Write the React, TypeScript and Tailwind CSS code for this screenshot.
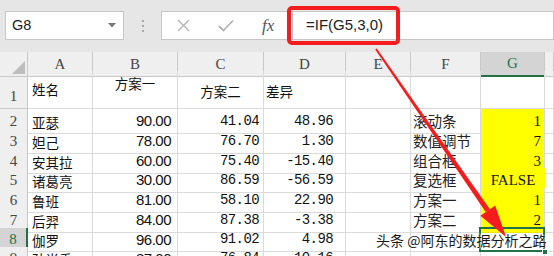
import React from "react";

const cjk = "font-['Noto_Sans_CJK_SC',sans-serif]";
const serif = "font-['Liberation_Serif','Noto_Sans_CJK_SC',serif]";
const mono = "font-['Liberation_Mono',monospace]";
const sans = "font-['Liberation_Sans',sans-serif]";

const cols = "grid grid-cols-[28px_65px_85px_86px_82px_65px_70px_64px_1fr]";
const cell = "border-r border-b border-[#dadada] flex items-center overflow-hidden whitespace-nowrap";
const rowHead =
  "border-r border-b border-[#c8c8c8] bg-[#efefef] flex items-center justify-center text-[15px] text-[#444] " + serif;

// data rows 2..9
const rows = [
  { n: 2, h: "h-[20px]", a: "亚瑟", b: "90.00", c: "41.04", d: "48.96", f: "滚动条", g: "1" },
  { n: 3, h: "h-[20px]", a: "妲己", b: "78.00", c: "76.70", d: "1.30", f: "数值调节", g: "7" },
  { n: 4, h: "h-[19px]", a: "安其拉", b: "60.00", c: "75.40", d: "-15.40", f: "组合框", g: "3" },
  { n: 5, h: "h-[20px]", a: "诸葛亮", b: "30.00", c: "86.59", d: "-56.59", f: "复选框", g: "FALSE" },
  { n: 6, h: "h-[20px]", a: "鲁班", b: "81.00", c: "58.10", d: "22.90", f: "方案一", g: "1" },
  { n: 7, h: "h-[20px]", a: "后羿", b: "84.00", c: "87.38", d: "-3.38", f: "方案二", g: "2" },
  { n: 8, h: "h-[19px]", a: "伽罗", b: "96.00", c: "91.02", d: "4.98", f: "", g: "" },
  { n: 9, h: "h-[20px]", a: "孙尚香", b: "87.00", c: "76.84", d: "10.16", f: "", g: "" },
];

const letters = ["A", "B", "C", "D", "E", "F", "G", ""];

function TopBar() {
  return (
    <div className="h-[52px] bg-[#e6e6e6] flex items-start pt-[11px] pl-[5px]">
      {/* name box */}
      <div className="w-[119px] h-[29px] bg-white border border-[#c6c6c6] flex items-center pl-[6px] pr-[7px]">
        <span className={"text-[14.5px] text-[#222] flex-1 " + sans}>G8</span>
        <svg width="8" height="5" viewBox="0 0 8 5">
          <path d="M0 0 L8 0 L4 4.5 Z" fill="#777" />
        </svg>
      </div>
      {/* grip dots */}
      <div className="w-[37px] h-[29px] flex flex-col items-center justify-center gap-[3px]">
        <span className="w-[2px] h-[2px] bg-[#a8a8a8]" />
        <span className="w-[2px] h-[2px] bg-[#a8a8a8]" />
        <span className="w-[2px] h-[2px] bg-[#a8a8a8]" />
      </div>
      {/* cancel / enter / fx */}
      <div className="w-[131px] h-[29px] bg-white border-y border-l border-[#c6c6c6] flex items-center">
        <svg className="ml-[15px]" width="13" height="13" viewBox="0 0 13 13">
          <path d="M1 1 L12 12 M12 1 L1 12" stroke="#b3b3b3" strokeWidth="1.3" fill="none" />
        </svg>
        <svg className="ml-[28px]" width="16" height="13" viewBox="0 0 16 13">
          <path d="M1 7 L5.5 11.5 L15 1.5" stroke="#b3b3b3" strokeWidth="1.8" fill="none" />
        </svg>
        <span className={"ml-[28px] italic text-[17px] text-[#555] " + serif}>fx</span>
      </div>
      {/* formula */}
      <div className="flex-1 h-[29px] bg-white border border-[#c6c6c6] flex items-center pl-[13px]">
        <span className={"text-[15px] text-[#222] " + sans}>=IF(G5,3,0)</span>
      </div>
    </div>
  );
}

function HeaderRow() {
  return (
    <div className={cols + " h-[19px]"}>
      <div className="border-r border-b border-[#c8c8c8] bg-[#efefef] relative">
        <svg className="absolute right-[2px] bottom-[2px]" width="13" height="13" viewBox="0 0 13 13">
          <path d="M13 0 L13 13 L0 13 Z" fill="#bdbdbd" />
        </svg>
      </div>
      {letters.map((l, i) =>
        l === "G" ? (
          <div
            key={i}
            className={
              "border-r border-b-2 border-r-[#c8c8c8] border-b-[#217346] bg-[#d4d4d4] flex items-center justify-center text-[15px] text-[#217346] " +
              serif
            }
          >
            {l}
          </div>
        ) : (
          <div
            key={i}
            className={
              "border-r border-b border-[#c8c8c8] bg-[#efefef] flex items-center justify-center text-[15px] text-[#444] " +
              serif
            }
          >
            {l}
          </div>
        )
      )}
    </div>
  );
}

function TitleRow() {
  return (
    <div className={cols + " h-[38px]"}>
      <div className={rowHead + " !items-end pb-[1px]"}>1</div>
      <div className={cell + " pl-[4px] text-[13.5px] text-[#111] " + cjk}>姓名</div>
      <div className={cell + " !items-start justify-center pt-[2px] text-[13.5px] text-[#111] " + cjk}>方案一</div>
      <div className={cell + " justify-center pt-[4px] text-[13.5px] text-[#111] " + cjk}>方案二</div>
      <div className={cell + " pl-[2px] pt-[4px] text-[13.5px] text-[#111] " + cjk}>差异</div>
      <div className={cell} />
      <div className={cell} />
      <div className={cell} />
      <div className={cell} />
    </div>
  );
}

function DataRow({ r }: { r: (typeof rows)[number] }) {
  const yellow = r.n >= 2 && r.n <= 7;
  const selected = r.n === 8;
  return (
    <div className={cols + " " + r.h}>
      {selected ? (
        <div
          className={
            "border-r-2 border-b border-r-[#217346] border-b-[#c8c8c8] bg-[#d4d4d4] flex items-center justify-center text-[15px] text-[#217346] " +
            serif
          }
        >
          {r.n}
        </div>
      ) : (
        <div className={rowHead}>{r.n}</div>
      )}
      <div className={cell + " pl-[4px] pt-[2px] text-[13.5px] text-[#111] " + cjk}>{r.a}</div>
      <div className={cell + " justify-end pr-[6px] pt-[1px] text-[15px] tracking-[-0.5px] text-[#111] " + sans}>
        {r.b}
      </div>
      <div className={cell + " justify-end pr-[4px] pt-[1px] text-[14px] tracking-[-0.6px] text-[#111] " + mono}>
        {r.c}
      </div>
      <div className={cell + " justify-end pr-[12px] pt-[1px] text-[14px] tracking-[-0.6px] text-[#111] " + mono}>
        {r.d}
      </div>
      <div className={cell} />
      <div className={cell + " pl-[2px] pt-[1px] text-[14.5px] text-[#222] " + cjk}>{r.f}</div>
      {yellow ? (
        <div
          className={
            "border-b border-[#e8e800] bg-[#ffff00] flex items-center pt-[1px] text-[15px] text-[#111] " +
            serif +
            (r.g === "FALSE" ? " justify-center text-[13.5px]" : " justify-end pr-[3px] border-r border-r-[#dadada]")
          }
        >
          {r.g}
        </div>
      ) : selected ? (
        <div className={cell + " relative overflow-visible"}>
          <span className="absolute -left-[2px] -top-[1px] -right-[1px] -bottom-px border-2 border-[#217346]" />
          <span className="absolute -right-[4px] -bottom-[4px] w-[6px] h-[6px] bg-[#217346] border border-white" />
        </div>
      ) : (
        <div className={cell} />
      )}
      <div className={cell} />
    </div>
  );
}

function Arrow() {
  return (
    <svg className="absolute left-0 top-0 pointer-events-none" width="554" height="256" viewBox="0 0 554 256">
      <polygon points="375.2,49.6 376.8,48.4 489.9,209.3 485.7,212.1" fill="#f41c1c" />
      <polygon points="480.4,215.8 495.2,205.6 506,237" fill="#f41c1c" />
    </svg>
  );
}

export default function App() {
  return (
    <div className="relative w-[554px] h-[256px] overflow-hidden bg-white">
      <TopBar />
      <HeaderRow />
      <TitleRow />
      {rows.map((r) => (
        <DataRow key={r.n} r={r} />
      ))}

      {/* red highlight around the formula */}
      <div className="absolute left-[287px] top-[6px] w-[113px] h-[39px] border-[4px] border-[#f41c1c] rounded-[5px]" />
      <Arrow />

      {/* watermark */}
      <div
        className={
          "absolute left-[376px] top-[230px] text-[14px] text-[#1a1a1a] whitespace-nowrap [text-shadow:0_0_2px_#fff,0_0_2px_#fff,0_0_1px_#fff] " +
          cjk
        }
      >
        头条 @阿东的数据分析之路
      </div>
    </div>
  );
}
